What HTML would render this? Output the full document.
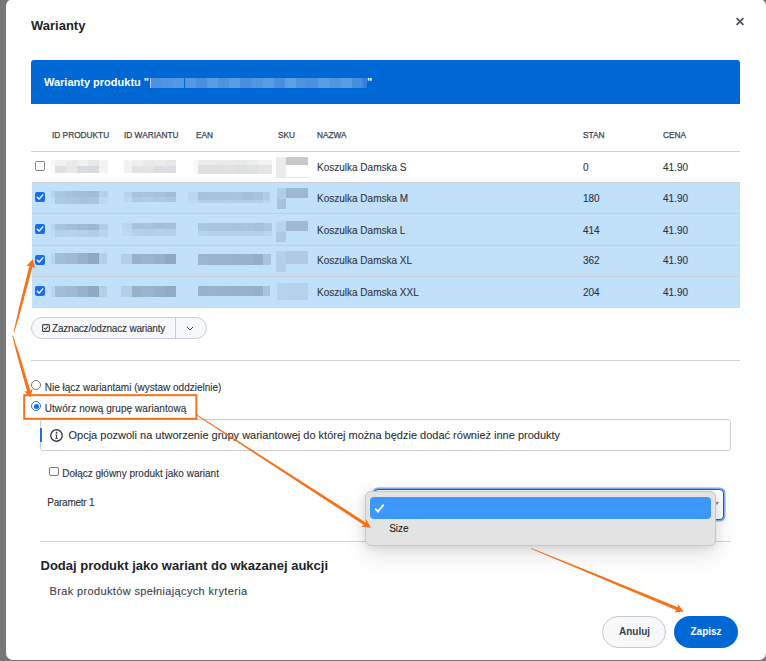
<!DOCTYPE html>
<html><head><meta charset="utf-8">
<style>
*{box-sizing:border-box;margin:0;padding:0}
html,body{width:766px;height:661px;overflow:hidden;background:#767778;font-family:"Liberation Sans",sans-serif;color:#3a4049}
.a{position:absolute;white-space:nowrap;line-height:1}
</style></head><body>
<div class="a" style="left:6px;top:-1px;width:760px;height:661px;background:#fff;border-radius:7px"></div>

<div class="a" style="left:31px;top:18.70px;font-size:13px;font-weight:700;color:#1f2329;">Warianty</div>
<svg class="a" style="left:735px;top:16px" width="10" height="10" viewBox="0 0 10 10"><path d="M2.1 2.6L7.9 8.4M7.9 2.6L2.1 8.4" stroke="#4f5864" stroke-width="1.9" stroke-linecap="round"/></svg>
<div class="a" style="left:31px;top:60px;width:709px;height:44px;background:#0068d4;border-radius:3px 3px 0 0"></div>
<div class="a" style="left:44px;top:76.79px;font-size:11px;font-weight:700;color:#fff;">Warianty produktu "</div>
<div class="a" style="left:367px;top:76.79px;font-size:11px;font-weight:700;color:#fff;">"</div>
<div class="a" style="left:52px;top:130.87px;font-size:8.3px;color:#3c4450;-webkit-text-stroke:0.25px #3c4450">ID PRODUKTU</div>
<div class="a" style="left:124px;top:130.87px;font-size:8.3px;color:#3c4450;-webkit-text-stroke:0.25px #3c4450">ID WARIANTU</div>
<div class="a" style="left:196px;top:130.87px;font-size:8.3px;color:#3c4450;-webkit-text-stroke:0.25px #3c4450">EAN</div>
<div class="a" style="left:278px;top:130.87px;font-size:8.3px;color:#3c4450;-webkit-text-stroke:0.25px #3c4450">SKU</div>
<div class="a" style="left:317px;top:130.87px;font-size:8.3px;color:#3c4450;-webkit-text-stroke:0.25px #3c4450">NAZWA</div>
<div class="a" style="left:583px;top:130.87px;font-size:8.3px;color:#3c4450;-webkit-text-stroke:0.25px #3c4450">STAN</div>
<div class="a" style="left:663px;top:130.87px;font-size:8.3px;color:#3c4450;-webkit-text-stroke:0.25px #3c4450">CENA</div>
<div class="a" style="left:31px;top:151px;width:709px;height:1px;background:#cdd1da;"></div>
<div class="a" style="left:32px;top:152px;width:708px;height:30px;background:#fff;"></div>
<div class="a" style="left:32px;top:182px;width:708px;height:1px;background:#c9ced8;"></div>
<div class="a" style="left:35px;top:161px;width:10px;height:10px;background:#fff;border-radius:2px;border:1px solid #858585"></div>
<div class="a" style="left:317px;top:162.53px;font-size:10px;color:#30353d;-webkit-text-stroke:0.1px #30353d;">Koszulka Damska S</div>
<div class="a" style="left:583px;top:162.53px;font-size:10px;color:#30353d;-webkit-text-stroke:0.1px #30353d;">0</div>
<div class="a" style="left:663px;top:162.53px;font-size:10px;color:#30353d;-webkit-text-stroke:0.1px #30353d;">41.90</div>
<div class="a" style="left:32px;top:183px;width:708px;height:30px;background:#c1e0fa;"></div>
<div class="a" style="left:32px;top:213px;width:708px;height:1px;background:#c9ced8;"></div>
<div class="a" style="left:35px;top:192px;width:10px;height:10px;background:#1a6df2;border-radius:2px"></div>
<svg class="a" style="left:35px;top:192px" width="10" height="10" viewBox="0 0 10 10"><path d="M2.3 5.2L4.2 7.1L7.8 2.9" stroke="#fff" stroke-width="1.4" fill="none" stroke-linecap="round" stroke-linejoin="round"/></svg>
<div class="a" style="left:317px;top:193.53px;font-size:10px;color:#30353d;-webkit-text-stroke:0.1px #30353d;">Koszulka Damska M</div>
<div class="a" style="left:583px;top:193.53px;font-size:10px;color:#30353d;-webkit-text-stroke:0.1px #30353d;">180</div>
<div class="a" style="left:663px;top:193.53px;font-size:10px;color:#30353d;-webkit-text-stroke:0.1px #30353d;">41.90</div>
<div class="a" style="left:32px;top:214px;width:708px;height:31px;background:#c1e0fa;"></div>
<div class="a" style="left:32px;top:245px;width:708px;height:1px;background:#c9ced8;"></div>
<div class="a" style="left:35px;top:224px;width:10px;height:10px;background:#1a6df2;border-radius:2px"></div>
<svg class="a" style="left:35px;top:224px" width="10" height="10" viewBox="0 0 10 10"><path d="M2.3 5.2L4.2 7.1L7.8 2.9" stroke="#fff" stroke-width="1.4" fill="none" stroke-linecap="round" stroke-linejoin="round"/></svg>
<div class="a" style="left:317px;top:225.73px;font-size:10px;color:#30353d;-webkit-text-stroke:0.1px #30353d;">Koszulka Damska L</div>
<div class="a" style="left:583px;top:225.73px;font-size:10px;color:#30353d;-webkit-text-stroke:0.1px #30353d;">414</div>
<div class="a" style="left:663px;top:225.73px;font-size:10px;color:#30353d;-webkit-text-stroke:0.1px #30353d;">41.90</div>
<div class="a" style="left:32px;top:246px;width:708px;height:30px;background:#c1e0fa;"></div>
<div class="a" style="left:32px;top:276px;width:708px;height:1px;background:#c9ced8;"></div>
<div class="a" style="left:35px;top:255px;width:10px;height:10px;background:#1a6df2;border-radius:2px"></div>
<svg class="a" style="left:35px;top:255px" width="10" height="10" viewBox="0 0 10 10"><path d="M2.3 5.2L4.2 7.1L7.8 2.9" stroke="#fff" stroke-width="1.4" fill="none" stroke-linecap="round" stroke-linejoin="round"/></svg>
<div class="a" style="left:317px;top:256.04px;font-size:10px;color:#30353d;-webkit-text-stroke:0.1px #30353d;">Koszulka Damska XL</div>
<div class="a" style="left:583px;top:256.04px;font-size:10px;color:#30353d;-webkit-text-stroke:0.1px #30353d;">362</div>
<div class="a" style="left:663px;top:256.04px;font-size:10px;color:#30353d;-webkit-text-stroke:0.1px #30353d;">41.90</div>
<div class="a" style="left:32px;top:277px;width:708px;height:31px;background:#c1e0fa;"></div>
<div class="a" style="left:35px;top:286px;width:10px;height:10px;background:#1a6df2;border-radius:2px"></div>
<svg class="a" style="left:35px;top:286px" width="10" height="10" viewBox="0 0 10 10"><path d="M2.3 5.2L4.2 7.1L7.8 2.9" stroke="#fff" stroke-width="1.4" fill="none" stroke-linecap="round" stroke-linejoin="round"/></svg>
<div class="a" style="left:317px;top:287.74px;font-size:10px;color:#30353d;-webkit-text-stroke:0.1px #30353d;">Koszulka Damska XXL</div>
<div class="a" style="left:583px;top:287.74px;font-size:10px;color:#30353d;-webkit-text-stroke:0.1px #30353d;">204</div>
<div class="a" style="left:663px;top:287.74px;font-size:10px;color:#30353d;-webkit-text-stroke:0.1px #30353d;">41.90</div>
<div class="a" style="left:51.0px;top:160px;width:4.0px;height:6px;background:#f8f8f8"></div>
<div class="a" style="left:55.0px;top:160px;width:11.0px;height:6px;background:#eff0ef"></div>
<div class="a" style="left:66.0px;top:160px;width:11.0px;height:6px;background:#e9eaec"></div>
<div class="a" style="left:77.0px;top:160px;width:11.0px;height:6px;background:#eef0ee"></div>
<div class="a" style="left:88.0px;top:160px;width:11.0px;height:6px;background:#e8e9eb"></div>
<div class="a" style="left:99.0px;top:160px;width:9.0px;height:6px;background:#f3f3f3"></div>
<div class="a" style="left:51.0px;top:166px;width:4.0px;height:7px;background:#fbfbfb"></div>
<div class="a" style="left:55.0px;top:166px;width:11.0px;height:7px;background:#dfe0e2"></div>
<div class="a" style="left:66.0px;top:166px;width:11.0px;height:7px;background:#e8e8e8"></div>
<div class="a" style="left:77.0px;top:166px;width:11.0px;height:7px;background:#dadbde"></div>
<div class="a" style="left:88.0px;top:166px;width:11.0px;height:7px;background:#d9dadc"></div>
<div class="a" style="left:99.0px;top:166px;width:9.0px;height:7px;background:#f3f3f3"></div>
<div class="a" style="left:124.0px;top:160px;width:8.0px;height:6px;background:#f3f3f3"></div>
<div class="a" style="left:132.0px;top:160px;width:11.0px;height:6px;background:#eeefee"></div>
<div class="a" style="left:143.0px;top:160px;width:11.0px;height:6px;background:#e9eaea"></div>
<div class="a" style="left:154.0px;top:160px;width:11.0px;height:6px;background:#ebeceb"></div>
<div class="a" style="left:165.0px;top:160px;width:11.0px;height:6px;background:#e6e7e9"></div>
<div class="a" style="left:124.0px;top:166px;width:8.0px;height:7px;background:#f1f1f1"></div>
<div class="a" style="left:132.0px;top:166px;width:11.0px;height:7px;background:#e1e2e4"></div>
<div class="a" style="left:143.0px;top:166px;width:11.0px;height:7px;background:#e3e4e5"></div>
<div class="a" style="left:154.0px;top:166px;width:11.0px;height:7px;background:#dcdde0"></div>
<div class="a" style="left:165.0px;top:166px;width:11.0px;height:7px;background:#dddee1"></div>
<div class="a" style="left:193.0px;top:160px;width:5.0px;height:5px;background:#f8f8f8"></div>
<div class="a" style="left:198.0px;top:160px;width:16.0px;height:5px;background:#ececec"></div>
<div class="a" style="left:214.0px;top:160px;width:11.0px;height:5px;background:#eaeaeb"></div>
<div class="a" style="left:225.0px;top:160px;width:11.0px;height:5px;background:#ebebec"></div>
<div class="a" style="left:236.0px;top:160px;width:11.0px;height:5px;background:#e9eaea"></div>
<div class="a" style="left:247.0px;top:160px;width:11.0px;height:5px;background:#eceded"></div>
<div class="a" style="left:258.0px;top:160px;width:14.0px;height:5px;background:#f3f3f3"></div>
<div class="a" style="left:193.0px;top:165px;width:5.0px;height:9px;background:#fafafa"></div>
<div class="a" style="left:198.0px;top:165px;width:16.0px;height:9px;background:#e0e0e2"></div>
<div class="a" style="left:214.0px;top:165px;width:11.0px;height:9px;background:#dfe0e1"></div>
<div class="a" style="left:225.0px;top:165px;width:11.0px;height:9px;background:#e0e1e3"></div>
<div class="a" style="left:236.0px;top:165px;width:11.0px;height:9px;background:#dedfe1"></div>
<div class="a" style="left:247.0px;top:165px;width:11.0px;height:9px;background:#e0e1e2"></div>
<div class="a" style="left:258.0px;top:165px;width:14.0px;height:9px;background:#e5e5e7"></div>
<div class="a" style="left:276px;top:157px;width:10px;height:20px;background:#ececec;"></div>
<div class="a" style="left:286px;top:157px;width:22px;height:8px;background:#c9c9c9;"></div>
<div class="a" style="left:276px;top:176.5px;width:32px;height:1.5px;background:#dde9f5;"></div>
<div class="a" style="left:51.0px;top:191px;width:4.0px;height:6px;background:#b5d3ef"></div>
<div class="a" style="left:55.0px;top:191px;width:11.0px;height:6px;background:#a9c6e0"></div>
<div class="a" style="left:66.0px;top:191px;width:11.0px;height:6px;background:#a5c2dc"></div>
<div class="a" style="left:77.0px;top:191px;width:11.0px;height:6px;background:#a2bfd9"></div>
<div class="a" style="left:88.0px;top:191px;width:11.0px;height:6px;background:#9fbbd5"></div>
<div class="a" style="left:99.0px;top:191px;width:9.0px;height:6px;background:#b3d0ea"></div>
<div class="a" style="left:51.0px;top:197px;width:4.0px;height:7px;background:#c0ddf5"></div>
<div class="a" style="left:55.0px;top:197px;width:11.0px;height:7px;background:#adcae4"></div>
<div class="a" style="left:66.0px;top:197px;width:11.0px;height:7px;background:#aac7e1"></div>
<div class="a" style="left:77.0px;top:197px;width:11.0px;height:7px;background:#a8c5df"></div>
<div class="a" style="left:88.0px;top:197px;width:11.0px;height:7px;background:#a9c6e0"></div>
<div class="a" style="left:99.0px;top:197px;width:9.0px;height:7px;background:#bcd9f1"></div>
<div class="a" style="left:124.0px;top:192px;width:8.0px;height:5px;background:#b6d3ec"></div>
<div class="a" style="left:132.0px;top:192px;width:11.0px;height:5px;background:#a6c3dd"></div>
<div class="a" style="left:143.0px;top:192px;width:11.0px;height:5px;background:#a9c6e0"></div>
<div class="a" style="left:154.0px;top:192px;width:11.0px;height:5px;background:#a4c1db"></div>
<div class="a" style="left:165.0px;top:192px;width:11.0px;height:5px;background:#a0bdd7"></div>
<div class="a" style="left:124.0px;top:197px;width:8.0px;height:5px;background:#bbd8f0"></div>
<div class="a" style="left:132.0px;top:197px;width:11.0px;height:5px;background:#adcae4"></div>
<div class="a" style="left:143.0px;top:197px;width:11.0px;height:5px;background:#b0cde7"></div>
<div class="a" style="left:154.0px;top:197px;width:11.0px;height:5px;background:#aecbe5"></div>
<div class="a" style="left:165.0px;top:197px;width:11.0px;height:5px;background:#abc8e2"></div>
<div class="a" style="left:188.0px;top:192px;width:10.0px;height:8px;background:#bad7ef"></div>
<div class="a" style="left:198.0px;top:192px;width:11.0px;height:8px;background:#a5c2dc"></div>
<div class="a" style="left:209.0px;top:192px;width:11.0px;height:8px;background:#a7c4de"></div>
<div class="a" style="left:220.0px;top:192px;width:11.0px;height:8px;background:#a6c3dd"></div>
<div class="a" style="left:231.0px;top:192px;width:11.0px;height:8px;background:#a8c5df"></div>
<div class="a" style="left:242.0px;top:192px;width:11.0px;height:8px;background:#a3c0da"></div>
<div class="a" style="left:253.0px;top:192px;width:10.0px;height:8px;background:#a6c3dd"></div>
<div class="a" style="left:263.0px;top:192px;width:7.0px;height:8px;background:#b1cee8"></div>
<div class="a" style="left:188.0px;top:200px;width:10.0px;height:3px;background:#bfdcf4"></div>
<div class="a" style="left:198.0px;top:200px;width:11.0px;height:3px;background:#b4d1ea"></div>
<div class="a" style="left:209.0px;top:200px;width:11.0px;height:3px;background:#b3d0e9"></div>
<div class="a" style="left:220.0px;top:200px;width:11.0px;height:3px;background:#b5d2eb"></div>
<div class="a" style="left:231.0px;top:200px;width:11.0px;height:3px;background:#b4d1ea"></div>
<div class="a" style="left:242.0px;top:200px;width:11.0px;height:3px;background:#b2cfe8"></div>
<div class="a" style="left:253.0px;top:200px;width:10.0px;height:3px;background:#b4d1ea"></div>
<div class="a" style="left:263.0px;top:200px;width:7.0px;height:3px;background:#bbd8f0"></div>
<div class="a" style="left:277px;top:188px;width:9px;height:21px;background:#b0cde6;"></div>
<div class="a" style="left:277px;top:199px;width:9px;height:10px;background:#a6c3dc;"></div>
<div class="a" style="left:286px;top:188px;width:22px;height:10px;background:#9cb7d0;"></div>
<div class="a" style="left:51.0px;top:224px;width:4.0px;height:6px;background:#b9d6ef"></div>
<div class="a" style="left:55.0px;top:224px;width:11.0px;height:6px;background:#a7c4de"></div>
<div class="a" style="left:66.0px;top:224px;width:11.0px;height:6px;background:#a3c0da"></div>
<div class="a" style="left:77.0px;top:224px;width:11.0px;height:6px;background:#9fbcd6"></div>
<div class="a" style="left:88.0px;top:224px;width:11.0px;height:6px;background:#9cb8d2"></div>
<div class="a" style="left:99.0px;top:224px;width:9.0px;height:6px;background:#b0cde7"></div>
<div class="a" style="left:51.0px;top:230px;width:4.0px;height:7px;background:#bfdcf4"></div>
<div class="a" style="left:55.0px;top:230px;width:11.0px;height:7px;background:#b5d2eb"></div>
<div class="a" style="left:66.0px;top:230px;width:11.0px;height:7px;background:#b7d4ed"></div>
<div class="a" style="left:77.0px;top:230px;width:11.0px;height:7px;background:#b4d1ea"></div>
<div class="a" style="left:88.0px;top:230px;width:11.0px;height:7px;background:#b1cee7"></div>
<div class="a" style="left:99.0px;top:230px;width:9.0px;height:7px;background:#bad7f0"></div>
<div class="a" style="left:122.0px;top:223px;width:10.0px;height:6px;background:#b9d6ef"></div>
<div class="a" style="left:132.0px;top:223px;width:11.0px;height:6px;background:#a7c4de"></div>
<div class="a" style="left:143.0px;top:223px;width:11.0px;height:6px;background:#a6c3dd"></div>
<div class="a" style="left:154.0px;top:223px;width:11.0px;height:6px;background:#a3c0da"></div>
<div class="a" style="left:165.0px;top:223px;width:11.0px;height:6px;background:#a5c2dc"></div>
<div class="a" style="left:122.0px;top:229px;width:10.0px;height:7px;background:#bdd9f2"></div>
<div class="a" style="left:132.0px;top:229px;width:11.0px;height:7px;background:#b4d1ea"></div>
<div class="a" style="left:143.0px;top:229px;width:11.0px;height:7px;background:#b2cfe8"></div>
<div class="a" style="left:154.0px;top:229px;width:11.0px;height:7px;background:#b5d2eb"></div>
<div class="a" style="left:165.0px;top:229px;width:11.0px;height:7px;background:#b3d0e9"></div>
<div class="a" style="left:198.0px;top:223px;width:11.0px;height:8px;background:#a9c6e0"></div>
<div class="a" style="left:209.0px;top:223px;width:11.0px;height:8px;background:#a7c4de"></div>
<div class="a" style="left:220.0px;top:223px;width:11.0px;height:8px;background:#a8c5df"></div>
<div class="a" style="left:231.0px;top:223px;width:11.0px;height:8px;background:#a6c3dd"></div>
<div class="a" style="left:242.0px;top:223px;width:11.0px;height:8px;background:#a8c5df"></div>
<div class="a" style="left:253.0px;top:223px;width:11.0px;height:8px;background:#a5c2dc"></div>
<div class="a" style="left:264.0px;top:223px;width:8.0px;height:8px;background:#abc8e2"></div>
<div class="a" style="left:198.0px;top:231px;width:11.0px;height:5px;background:#b6d3ec"></div>
<div class="a" style="left:209.0px;top:231px;width:11.0px;height:5px;background:#b4d1ea"></div>
<div class="a" style="left:220.0px;top:231px;width:11.0px;height:5px;background:#b5d2eb"></div>
<div class="a" style="left:231.0px;top:231px;width:11.0px;height:5px;background:#b5d2eb"></div>
<div class="a" style="left:242.0px;top:231px;width:11.0px;height:5px;background:#b4d1ea"></div>
<div class="a" style="left:253.0px;top:231px;width:11.0px;height:5px;background:#b3d0e9"></div>
<div class="a" style="left:264.0px;top:231px;width:8.0px;height:5px;background:#b8d5ee"></div>
<div class="a" style="left:276px;top:221px;width:10px;height:21px;background:#b8d5ee;"></div>
<div class="a" style="left:276px;top:232px;width:10px;height:10px;background:#adcae3;"></div>
<div class="a" style="left:286px;top:221px;width:22px;height:10px;background:#9fbad3;"></div>
<div class="a" style="left:51.0px;top:253px;width:4.0px;height:11px;background:#b9d6f0"></div>
<div class="a" style="left:55.0px;top:253px;width:11.0px;height:11px;background:#a3bfd8"></div>
<div class="a" style="left:66.0px;top:253px;width:11.0px;height:11px;background:#9fbad3"></div>
<div class="a" style="left:77.0px;top:253px;width:11.0px;height:11px;background:#97b2cb"></div>
<div class="a" style="left:88.0px;top:253px;width:11.0px;height:11px;background:#8fa9c2"></div>
<div class="a" style="left:99.0px;top:253px;width:8.0px;height:11px;background:#b3cfe6"></div>
<div class="a" style="left:121.0px;top:254px;width:11.0px;height:10px;background:#b3cfe6"></div>
<div class="a" style="left:132.0px;top:254px;width:11.0px;height:10px;background:#97b2cb"></div>
<div class="a" style="left:143.0px;top:254px;width:11.0px;height:10px;background:#9ab5ce"></div>
<div class="a" style="left:154.0px;top:254px;width:11.0px;height:10px;background:#95b0c9"></div>
<div class="a" style="left:165.0px;top:254px;width:11.0px;height:10px;background:#8fa9c2"></div>
<div class="a" style="left:198.0px;top:254px;width:11.0px;height:11px;background:#9bb6cf"></div>
<div class="a" style="left:209.0px;top:254px;width:11.0px;height:11px;background:#99b4cd"></div>
<div class="a" style="left:220.0px;top:254px;width:11.0px;height:11px;background:#98b3cc"></div>
<div class="a" style="left:231.0px;top:254px;width:11.0px;height:11px;background:#97b2cb"></div>
<div class="a" style="left:242.0px;top:254px;width:11.0px;height:11px;background:#98b3cc"></div>
<div class="a" style="left:253.0px;top:254px;width:10.0px;height:11px;background:#93aec7"></div>
<div class="a" style="left:263.0px;top:254px;width:8.0px;height:11px;background:#a8c4dc"></div>
<div class="a" style="left:276px;top:251px;width:10px;height:21px;background:#b5d1e9;"></div>
<div class="a" style="left:286px;top:251px;width:22px;height:13px;background:#afcbe3;"></div>
<div class="a" style="left:51.0px;top:286px;width:4.0px;height:11px;background:#b9d6f0"></div>
<div class="a" style="left:55.0px;top:286px;width:11.0px;height:11px;background:#a3bfd8"></div>
<div class="a" style="left:66.0px;top:286px;width:11.0px;height:11px;background:#9fbad3"></div>
<div class="a" style="left:77.0px;top:286px;width:11.0px;height:11px;background:#97b2cb"></div>
<div class="a" style="left:88.0px;top:286px;width:11.0px;height:11px;background:#8fa9c2"></div>
<div class="a" style="left:99.0px;top:286px;width:8.0px;height:11px;background:#b3cfe6"></div>
<div class="a" style="left:121.0px;top:286px;width:11.0px;height:11px;background:#b3cfe6"></div>
<div class="a" style="left:132.0px;top:286px;width:11.0px;height:11px;background:#97b2cb"></div>
<div class="a" style="left:143.0px;top:286px;width:11.0px;height:11px;background:#9ab5ce"></div>
<div class="a" style="left:154.0px;top:286px;width:11.0px;height:11px;background:#95b0c9"></div>
<div class="a" style="left:165.0px;top:286px;width:11.0px;height:11px;background:#91abc4"></div>
<div class="a" style="left:198.0px;top:286px;width:11.0px;height:10px;background:#97b2cb"></div>
<div class="a" style="left:209.0px;top:286px;width:11.0px;height:10px;background:#98b3cc"></div>
<div class="a" style="left:220.0px;top:286px;width:11.0px;height:10px;background:#97b2cb"></div>
<div class="a" style="left:231.0px;top:286px;width:11.0px;height:10px;background:#96b1ca"></div>
<div class="a" style="left:242.0px;top:286px;width:11.0px;height:10px;background:#97b2cb"></div>
<div class="a" style="left:253.0px;top:286px;width:10.0px;height:10px;background:#94afc8"></div>
<div class="a" style="left:263.0px;top:286px;width:7.0px;height:10px;background:#a9c5dd"></div>
<div class="a" style="left:277px;top:283px;width:10px;height:17px;background:#b8d4ec;"></div>
<div class="a" style="left:287px;top:283px;width:21px;height:17px;background:#b6d2ea;"></div>
<div class="a" style="left:151.0px;top:78px;width:11.2px;height:10px;background:#4a92e0"></div>
<div class="a" style="left:162.2px;top:78px;width:11.2px;height:10px;background:#4f95e1"></div>
<div class="a" style="left:173.3px;top:78px;width:11.2px;height:10px;background:#5398e2"></div>
<div class="a" style="left:184.5px;top:78px;width:11.2px;height:10px;background:#5598e2"></div>
<div class="a" style="left:195.6px;top:78px;width:11.2px;height:10px;background:#4690df"></div>
<div class="a" style="left:206.8px;top:78px;width:11.2px;height:10px;background:#5a9ce4"></div>
<div class="a" style="left:217.9px;top:78px;width:11.2px;height:10px;background:#4c93e0"></div>
<div class="a" style="left:229.1px;top:78px;width:11.2px;height:10px;background:#5a9ce4"></div>
<div class="a" style="left:240.3px;top:78px;width:11.2px;height:10px;background:#4690df"></div>
<div class="a" style="left:251.4px;top:78px;width:11.2px;height:10px;background:#4f95e1"></div>
<div class="a" style="left:262.6px;top:78px;width:11.2px;height:10px;background:#5a9ce4"></div>
<div class="a" style="left:273.7px;top:78px;width:11.2px;height:10px;background:#4690df"></div>
<div class="a" style="left:284.9px;top:78px;width:11.2px;height:10px;background:#5d9fe5"></div>
<div class="a" style="left:296.1px;top:78px;width:11.2px;height:10px;background:#4c93e0"></div>
<div class="a" style="left:307.2px;top:78px;width:11.2px;height:10px;background:#4791df"></div>
<div class="a" style="left:318.4px;top:78px;width:11.2px;height:10px;background:#5a9ce4"></div>
<div class="a" style="left:329.5px;top:78px;width:11.2px;height:10px;background:#4f95e1"></div>
<div class="a" style="left:340.7px;top:78px;width:11.2px;height:10px;background:#5a9ce4"></div>
<div class="a" style="left:351.8px;top:78px;width:11.2px;height:10px;background:#468fdf"></div>
<div class="a" style="left:150px;top:78px;width:1px;height:10px;background:#a9cdf3;"></div>
<div class="a" style="left:363px;top:78px;width:4px;height:10px;background:#2f80db;"></div>
<div class="a" style="left:31px;top:317px;width:176px;height:22px;border:1px solid #c9cdd5;background:#f7f8fa;border-radius:11px"></div>
<div class="a" style="left:175px;top:317px;width:1px;height:22px;background:#c9cdd5;"></div>
<svg class="a" style="left:42px;top:324px" width="8" height="8" viewBox="0 0 8 8"><rect x="0.6" y="0.6" width="6.8" height="6.8" rx="1" fill="none" stroke="#3a3f47" stroke-width="1.1"/><path d="M2.2 4.1L3.5 5.3L5.9 2.7" stroke="#3a3f47" stroke-width="1.1" fill="none"/></svg>
<div class="a" style="left:52px;top:324.14px;font-size:10px;color:#2c3138;-webkit-text-stroke:0.1px #2c3138;letter-spacing:-0.2px">Zaznacz/odznacz warianty</div>
<svg class="a" style="left:186px;top:326px" width="8" height="5" viewBox="0 0 8 5"><path d="M1 1L4 4L7 1" stroke="#3a3f47" stroke-width="1" fill="none"/></svg>
<div class="a" style="left:31px;top:360px;width:709px;height:1px;background:#cfd3da;"></div>
<div class="a" style="left:31px;top:380px;width:10px;height:10px;border-radius:50%;border:1px solid #777;background:#fff"></div>
<div class="a" style="left:44.7px;top:383.04px;font-size:10px;color:#2c3138;-webkit-text-stroke:0.1px #2c3138;">Nie łącz wariantami (wystaw oddzielnie)</div>
<div class="a" style="left:31px;top:401px;width:10px;height:10px;border-radius:50%;border:1px solid #1a73ff;background:#fff"></div>
<div class="a" style="left:33.5px;top:403.5px;width:5px;height:5px;border-radius:50%;background:#1a66ff"></div>
<div class="a" style="left:44.7px;top:403.94px;font-size:10px;color:#2c3138;-webkit-text-stroke:0.1px #2c3138;letter-spacing:0.08px">Utwórz nową grupę wariantową</div>
<div class="a" style="left:40px;top:419px;width:691px;height:32px;border:1px solid #c9ced6;border-radius:3px;background:#fff"></div>
<div class="a" style="left:40px;top:428px;width:2px;height:14px;background:#1a6df2;"></div>
<svg class="a" style="left:50px;top:429px" width="13" height="13" viewBox="0 0 13 13"><circle cx="6.5" cy="6.5" r="5.75" fill="none" stroke="#3a3f47" stroke-width="1.4"/><path d="M5.3 5.4H7.1V8.9H7.9V9.8H5.1V8.9H5.9V6.3H5.3Z" fill="#3a3f47"/><circle cx="6.6" cy="3.8" r="0.95" fill="#3a3f47"/></svg>
<div class="a" style="left:68.5px;top:429.99px;font-size:11px;color:#2c3138;-webkit-text-stroke:0.1px #2c3138;">Opcja pozwoli na utworzenie grupy wariantowej do której można będzie dodać również inne produkty</div>
<div class="a" style="left:49px;top:467px;width:10px;height:9px;background:#fff;border:1px solid #777;border-radius:2px"></div>
<div class="a" style="left:62.2px;top:468.54px;font-size:10px;color:#2c3138;-webkit-text-stroke:0.1px #2c3138;">Dołącz główny produkt jako wariant</div>
<div class="a" style="left:47.3px;top:497.74px;font-size:10px;color:#2c3138;-webkit-text-stroke:0.1px #2c3138;letter-spacing:-0.25px">Parametr 1</div>
<div class="a" style="left:40px;top:541px;width:691px;height:1px;background:#cfd3da;"></div>
<div class="a" style="left:373.5px;top:488.5px;width:350px;height:31px;border:1px solid #0a62d0;border-radius:4px;background:#fff;box-shadow:0 0 0 1.5px #7fb2f0"></div>
<svg class="a" style="left:715px;top:502px" width="4" height="3" viewBox="0 0 4 3"><path d="M0 0L4 0L2 3Z" fill="#888"/></svg>
<div class="a" style="left:365px;top:491px;width:351px;height:55px;background:#e3e3e3;border:1px solid #c8c8c8;border-radius:6px;box-shadow:0 1px 10px rgba(0,0,0,0.10),0 8px 22px rgba(0,0,0,0.13)"></div>
<div class="a" style="left:370px;top:497px;width:341px;height:22px;background:#3e97fd;border-radius:4px"></div>
<svg class="a" style="left:374px;top:503px" width="11" height="11" viewBox="0 0 11 11"><path d="M1.2 5.6L4 8.6L9.6 1.6" stroke="#fff" stroke-width="1.8" fill="none"/></svg>
<div class="a" style="left:389.2px;top:524.13px;font-size:10px;color:#222;-webkit-text-stroke:0.1px #222;">Size</div>
<div class="a" style="left:40.5px;top:558.90px;font-size:13px;font-weight:700;color:#1f2329;">Dodaj produkt jako wariant do wkazanej aukcji</div>
<div class="a" style="left:49.5px;top:586.09px;font-size:11px;color:#3a4049;-webkit-text-stroke:0.1px #3a4049;letter-spacing:0.36px">Brak produktów spełniających kryteria</div>
<div class="a" style="left:602px;top:616px;width:64px;height:32px;border:1px solid #c6cad1;border-radius:16px;background:#f7f8f9"></div>
<div class="a" style="left:619px;top:627.24px;font-size:10px;font-weight:700;color:#3a3f47;">Anuluj</div>
<div class="a" style="left:674px;top:616px;width:64px;height:32px;border-radius:16px;background:#0068d4"></div>
<div class="a" style="left:690.5px;top:627.24px;font-size:10px;font-weight:700;color:#fff;">Zapisz</div>
<svg class="a" style="left:0;top:0" width="766" height="661" viewBox="0 0 766 661">
<rect x="24.2" y="395.2" width="172.2" height="23.6" fill="none" stroke="#f4721a" stroke-width="2"/>
<g fill="#f4721a">
<path d="M14.29 332.60 L21.04 309.58 L32.58 266.58 L35.14 268.48 L32.80 259.10 L26.23 266.18 L29.38 265.76 L18.72 308.99 L13.51 332.40 Z"/>
<path d="M12.22 335.61 L17.08 355.28 L27.12 391.53 L24.15 391.14 L30.60 397.60 L32.60 388.69 L30.29 390.61 L19.39 354.62 L12.98 335.39 Z"/>
<path d="M195.16 414.48 L254.19 453.23 L363.90 525.08 L361.32 526.86 L370.90 527.70 L366.21 519.30 L365.64 522.39 L255.17 451.72 L195.64 413.72 Z"/>
<path d="M530.83 548.72 L581.79 570.32 L676.50 610.28 L674.33 612.41 L683.90 611.50 L677.76 604.09 L677.80 607.14 L582.52 568.57 L531.17 547.88 Z"/>
</g></svg>
</body></html>
